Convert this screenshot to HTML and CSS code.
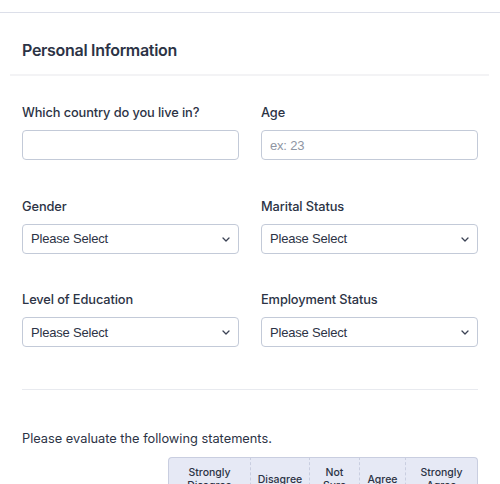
FILE: index.html
```html
<!DOCTYPE html>
<html>
<head>
<meta charset="utf-8">
<link rel="stylesheet" href="styles.css">
</head>
<body>
<div class="form">
  <div class="header">
    <h2 class="title">Personal Information</h2>
  </div>
  <div class="sep-top"></div>
  <div class="content">
    <div class="grid">
      <div class="field">
        <label class="label">Which country do you live in?</label>
        <input class="input" type="text">
      </div>
      <div class="field">
        <label class="label">Age</label>
        <input class="input" type="text" placeholder="ex: 23">
      </div>
      <div class="field">
        <label class="label">Gender</label>
        <div class="select-wrap">
          <select class="select"><option>Please Select</option></select>
          <svg class="chev" width="8" height="5" viewBox="0 0 8 5"><path d="M1 1l3 3 3-3" fill="none" stroke="#3b4254" stroke-width="1.3" stroke-linecap="round" stroke-linejoin="round"/></svg>
        </div>
      </div>
      <div class="field">
        <label class="label">Marital Status</label>
        <div class="select-wrap">
          <select class="select"><option>Please Select</option></select>
          <svg class="chev" width="8" height="5" viewBox="0 0 8 5"><path d="M1 1l3 3 3-3" fill="none" stroke="#3b4254" stroke-width="1.3" stroke-linecap="round" stroke-linejoin="round"/></svg>
        </div>
      </div>
      <div class="field">
        <label class="label">Level of Education</label>
        <div class="select-wrap">
          <select class="select"><option>Please Select</option></select>
          <svg class="chev" width="8" height="5" viewBox="0 0 8 5"><path d="M1 1l3 3 3-3" fill="none" stroke="#3b4254" stroke-width="1.3" stroke-linecap="round" stroke-linejoin="round"/></svg>
        </div>
      </div>
      <div class="field">
        <label class="label">Employment Status</label>
        <div class="select-wrap">
          <select class="select"><option>Please Select</option></select>
          <svg class="chev" width="8" height="5" viewBox="0 0 8 5"><path d="M1 1l3 3 3-3" fill="none" stroke="#3b4254" stroke-width="1.3" stroke-linecap="round" stroke-linejoin="round"/></svg>
        </div>
      </div>
    </div>
    <div class="divider"></div>
    <p class="question">Please evaluate the following statements.</p>
    <table class="matrix">
      <thead>
        <tr>
          <th class="blank"></th>
          <th class="c1">Strongly Disagree</th>
          <th class="c2">Disagree</th>
          <th class="c3">Not Sure</th>
          <th class="c4">Agree</th>
          <th class="c5">Strongly Agree</th>
        </tr>
      </thead>
    </table>
  </div>
</div>
</body>
</html>
```

FILE: styles.css
```css
* { box-sizing: border-box; }
html, body { margin: 0; padding: 0; background: #fff; }
body {
  font-family: Inter, "Noto Sans", "Liberation Sans", sans-serif;
  color: #2c3345;
  padding-top: 12px;
}
.form {
  border-top: 1px solid #dcdfe9;
}
.header {
  padding: 27px 22px 14px;
}
.title {
  margin: 0;
  font-size: 16px;
  line-height: 20px;
  font-weight: 600;
  letter-spacing: -0.3px;
  color: #2c3345;
}
.sep-top {
  margin: 0 11px 0 10px;
  height: 2px;
  background: #f3f3f5;
}
.content {
  padding: 28px 22px 0;
}
.grid {
  display: grid;
  grid-template-columns: 1fr 1fr;
  column-gap: 22px;
  row-gap: 37.5px;
}
.field {
  display: flex;
  flex-direction: column;
  gap: 8px;
}
.label {
  font-size: 12.8px;
  line-height: 18px;
  font-weight: 500;
  letter-spacing: -0.1px;
  color: #2c3345;
}
.input, .select {
  width: 100%;
  height: 30px;
  border: 1px solid #c3cad8;
  border-radius: 4px;
  background: #fff;
  font-family: "Liberation Sans", Arial, sans-serif;
  font-size: 13px;
  letter-spacing: -0.2px;
  color: #2c3345;
  padding: 0 8px;
  outline: none;
}
.input::placeholder { color: #8f96a3; }
.select-wrap { position: relative; }
.select {
  -webkit-appearance: none;
  appearance: none;
  padding-left: 8px;
}
.chev {
  position: absolute;
  right: 9px;
  top: 13px;
}
.divider {
  margin-top: 42px;
  height: 1px;
  background: #e8eaef;
}
.question {
  margin: 40px 0 0;
  font-size: 12.8px;
  line-height: 18px;
  font-weight: 400;
  color: #2c3345;
}
.matrix {
  margin-top: 9px;
  width: 456px;
  border-collapse: separate;
  border-spacing: 0;
  table-layout: fixed;
}
.matrix th {
  font-size: 10.5px;
  line-height: 13px;
  font-weight: 500;
  color: #2c3345;
  text-align: center;
  background: #e6e9f5;
  border-top: 1px solid #c9cee0;
  border-left: 1px dashed #c9cee0;
  padding: 7px 3px 8px;
  height: 44px;
}
.matrix th.blank {
  width: 146px;
  background: transparent;
  border: none;
}
.matrix th.c1 { width: 82px; border-left: 1px solid #c9cee0; border-top-left-radius: 4px; }
.matrix th.c2 { width: 59px; }
.matrix th.c3 { width: 50px; }
.matrix th.c4 { width: 46px; }
.matrix th.c5 { width: 73px; border-right: 1px solid #c9cee0; border-top-right-radius: 4px; }
```
